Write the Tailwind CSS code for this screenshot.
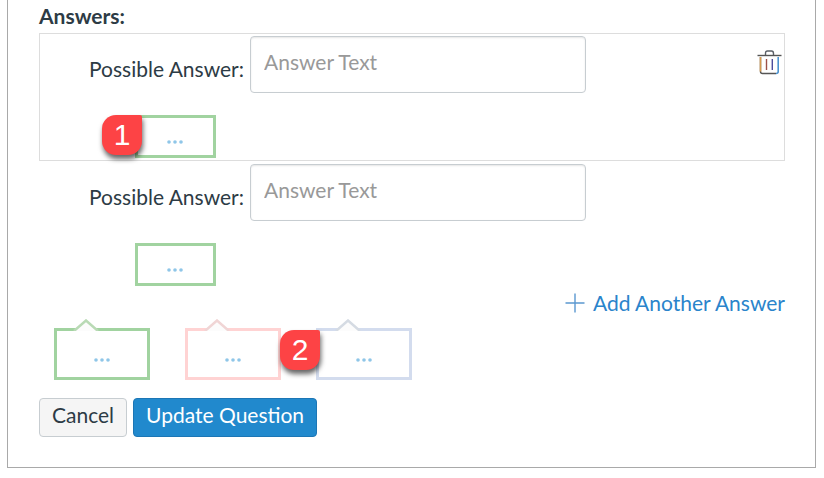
<!DOCTYPE html>
<html lang="en">
<head>
    <meta charset="UTF-8">
    <meta name="viewport" content="width=device-width, initial-scale=1.0">
    <title>Edit Question - Answers</title>
    <script src="https://cdn.jsdelivr.net/npm/@tailwindcss/browser@4"></script>
</head>
<body class="bg-white font-[Lato,sans-serif] text-[21px] leading-[30px] text-[#2d3b45]">
    <main class="ml-[7px] mr-2 border border-t-0 border-[#a9a9a9] pl-[31px] pr-[30px] pb-[30px]">
        <h2 class="pt-px pb-[2px] font-bold">Answers:</h2>

        <form>
            <!-- Answer 1 -->
            <div class="relative border border-[#dddddd] pt-[2px] pb-[2px]">
                <div class="flex items-center">
                    <label for="answer-1" class="w-[204px] pt-3 pb-1 text-right">Possible Answer:</label>
                    <input type="text" id="answer-1" placeholder="Answer Text" class="ml-[6px] h-[57px] w-[336px] rounded-[4px] border border-[#c7cdd1] px-[13px] pb-[6px] shadow-[inset_0_1px_2px_rgba(0,0,0,0.1)] placeholder:text-[#999999]">
                </div>
                <button type="button" aria-label="Delete answer" class="absolute top-[15px] right-[2px]">
                    <svg class="block h-[26px] w-[25px]" viewBox="0 0 25 26" fill="none">
                        <path d="M8.5 6V4.500Q8.5 2 10.5 2H14.5Q16.5 2 16.5 4.500V6" stroke="#5b6067" stroke-width="1.4"/>
                        <path d="M.5 6.5H24.5" stroke="#555" stroke-width="1.4"/>
                        <path d="M3.5 8V22.500Q3.5 24.500 5.5 24.500H19" stroke="#555" stroke-width="1.4"/>
                        <path d="M3.5 8V22.500" stroke="#d69a4e" stroke-width="1.6"/>
                        <path d="M19 24.500Q21.200 24.500 21.200 22.500V8" stroke="#4d93cf" stroke-width="1.6"/>
                        <path d="M9.500 10V21" stroke="#9c5148" stroke-width="1.4"/>
                        <path d="M15.300 10V21" stroke="#4d4c9c" stroke-width="1.4"/>
                    </svg>
                </button>
                <div class="relative mt-[22px] ml-[95px] w-[81px]">
                    <button type="button" aria-label="Answer comment" class="flex h-[43px] w-full items-center justify-center border-[3px] border-[#a1d3a0] pt-[10px] pr-[2px]">
                        <svg class="h-1 w-4" viewBox="0 0 16 4" fill="#8fc6e8"><circle cx="2" cy="2" r="1.8"/><circle cx="8" cy="2" r="1.8"/><circle cx="14" cy="2" r="1.8"/></svg>
                    </button>
                    <span class="absolute top-0 -left-[33px] flex size-10 items-center justify-center rounded-[14px] rounded-tr-[2px] bg-[#fd4345] font-['Liberation_Sans',sans-serif] text-[30px] text-white shadow-[1px_4px_5px_rgba(0,0,0,0.6)]">1</span>
                </div>
            </div>

            <!-- Answer 2 -->
            <div class="border border-transparent pt-[2px] pb-[2px]">
                <div class="flex items-center">
                    <label for="answer-2" class="w-[204px] pt-3 pb-1 text-right">Possible Answer:</label>
                    <input type="text" id="answer-2" placeholder="Answer Text" class="ml-[6px] h-[57px] w-[336px] rounded-[4px] border border-[#c7cdd1] px-[13px] pb-[6px] shadow-[inset_0_1px_2px_rgba(0,0,0,0.1)] placeholder:text-[#999999]">
                </div>
                <button type="button" aria-label="Answer comment" class="mt-[22px] ml-[95px] flex h-[43px] w-[81px] items-center justify-center border-[3px] border-[#a1d3a0] pt-[10px] pr-[2px]">
                    <svg class="h-1 w-4" viewBox="0 0 16 4" fill="#8fc6e8"><circle cx="2" cy="2" r="1.8"/><circle cx="8" cy="2" r="1.8"/><circle cx="14" cy="2" r="1.8"/></svg>
                </button>
            </div>

            <div class="-mt-px flex justify-end">
                <a href="#" class="flex items-center gap-2 text-[#2a84cb]">
                    <svg class="size-5" viewBox="0 0 20 20" stroke="#5b98d0" stroke-width="1.4"><path d="M.5 10H19.500M10 .5V19.500"/></svg>
                    Add Another Answer
                </a>
            </div>

            <!-- Question comments: correct, incorrect, general -->
            <div class="mt-[10px] ml-[15px] flex gap-[35px]">
                <button type="button" aria-label="Correct answer comment" class="relative flex h-[52px] w-24 items-center justify-center border-[3px] border-[#a1d3a0] pt-3">
                    <svg class="absolute -top-3 left-4 h-3 w-7" viewBox="0 0 28 12" fill="none"><path d="M1 12L13 1.500L25 12Z" fill="#fcfcfc"/><path d="M1 12L13 1.500L25 12" stroke="#b9dab5" stroke-width="2.500"/></svg>
                    <svg class="h-1 w-4" viewBox="0 0 16 4" fill="#8fc6e8"><circle cx="2" cy="2" r="1.8"/><circle cx="8" cy="2" r="1.8"/><circle cx="14" cy="2" r="1.8"/></svg>
                </button>
                <button type="button" aria-label="Incorrect answer comment" class="relative flex h-[52px] w-24 items-center justify-center border-[3px] border-[#ffd3d3] pt-3">
                    <svg class="absolute -top-3 left-4 h-3 w-7" viewBox="0 0 28 12" fill="none"><path d="M1 12L13 1.500L25 12Z" fill="#fcfcfc"/><path d="M1 12L13 1.500L25 12" stroke="#f0d5d5" stroke-width="2.500"/></svg>
                    <svg class="h-1 w-4" viewBox="0 0 16 4" fill="#8fc6e8"><circle cx="2" cy="2" r="1.8"/><circle cx="8" cy="2" r="1.8"/><circle cx="14" cy="2" r="1.8"/></svg>
                </button>
                <div class="relative">
                    <button type="button" aria-label="General comment" class="relative flex h-[52px] w-24 items-center justify-center border-[3px] border-[#d3dcee] pt-3">
                        <svg class="absolute -top-3 left-4 h-3 w-7" viewBox="0 0 28 12" fill="none"><path d="M1 12L13 1.500L25 12Z" fill="#fcfcfc"/><path d="M1 12L13 1.500L25 12" stroke="#d5dbe3" stroke-width="2.500"/></svg>
                        <svg class="h-1 w-4" viewBox="0 0 16 4" fill="#8fc6e8"><circle cx="2" cy="2" r="1.8"/><circle cx="8" cy="2" r="1.8"/><circle cx="14" cy="2" r="1.8"/></svg>
                    </button>
                    <span class="absolute top-[2px] -left-9 flex size-10 items-center justify-center rounded-[14px] rounded-tr-[2px] bg-[#fd4345] font-['Liberation_Sans',sans-serif] text-[30px] text-white shadow-[1px_4px_5px_rgba(0,0,0,0.6)]">2</span>
                </div>
            </div>

            <div class="mt-[18px] flex gap-[6px]">
                <button type="button" class="h-[39px] rounded-[4px] border border-[#c7cdd1] bg-[#f5f5f5] px-3 pb-[6px]">Cancel</button>
                <button type="submit" class="h-[39px] rounded-[4px] border border-[#1c76b5] bg-[#2189cd] px-3 pb-[6px] text-white">Update Question</button>
            </div>
        </form>
    </main>
</body>
</html>
